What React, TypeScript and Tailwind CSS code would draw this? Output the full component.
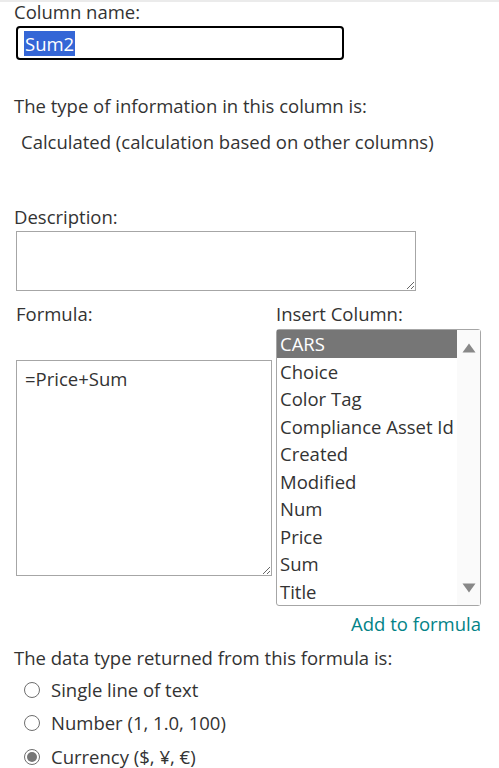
import { useState } from "react";

const columns = [
  "CARS",
  "Choice",
  "Color Tag",
  "Compliance Asset Id",
  "Created",
  "Modified",
  "Num",
  "Price",
  "Sum",
  "Title",
];

const returnTypes = [
  "Single line of text",
  "Number (1, 1.0, 100)",
  "Currency ($, ¥, €)",
];

const App = () => {
  const [selected, setSelected] = useState(0);
  const [returnType, setReturnType] = useState(2);

  return (
    <main className="w-[499px] h-[768px] overflow-hidden bg-white border-t-2 border-[#ebebeb] text-[#333333] text-[18.5px] font-['Open_Sans',sans-serif]">
      <div className="pl-[14px]">
        {/* Column name */}
        <p className="leading-[22px] -mt-[1px]">Column name:</p>
        <div className="mt-[3px] ml-[2px] w-[328px] h-[34px] border-2 border-black rounded-[4px] flex items-center pl-[6px]">
          <span className="bg-[#3466d6] text-white leading-[25px] px-[1px]">Sum2</span>
        </div>

        {/* Column type */}
        <p className="mt-[34px] leading-6">The type of information in this column is:</p>
        <p className="mt-[12px] leading-6 pl-[7px]">
          Calculated (calculation based on other columns)
        </p>

        {/* Description */}
        <p className="mt-[51px] leading-6">Description:</p>
        <textarea
          className="block mt-[2px] ml-[2px] w-[400px] h-[60px] border border-[#a6a6a6] outline-none"
          defaultValue=""
        />

        {/* Formula + Insert Column */}
        <div className="flex mt-[11px]">
          <div className="w-[262px] flex flex-col">
            <p className="leading-6 pl-[2px]">Formula:</p>
            <textarea
              className="block mt-[34px] ml-[2px] w-[256px] h-[216px] border border-[#a6a6a6] outline-none pt-[6px] px-[8px] leading-6"
              defaultValue="=Price+Sum"
            />
          </div>
          <div className="flex flex-col">
            <p className="leading-6">Insert Column:</p>
            <div className="mt-[3px] w-[205px] border border-[#a6a6a6] rounded-[3px] flex">
              <ul className="flex-1">
                {columns.map((col, index) => (
                  <li
                    key={col}
                    onClick={() => setSelected(index)}
                    className={
                      index === selected
                        ? "h-[27.5px] leading-[27.5px] pl-[3px] bg-[#767676] text-white whitespace-nowrap"
                        : "h-[27.5px] leading-[27.5px] pl-[3px] whitespace-nowrap"
                    }
                  >
                    {col}
                  </li>
                ))}
              </ul>
              <div className="w-[23px] bg-[#fafafa] flex flex-col items-center justify-between pt-[13px] pb-[12px]">
                <svg width="14" height="10" viewBox="0 0 14 10">
                  <polygon points="7,0.5 13.5,9.5 0.5,9.5" fill="#888888" />
                </svg>
                <svg width="14" height="10" viewBox="0 0 14 10">
                  <polygon points="0.5,0.5 13.5,0.5 7,9.5" fill="#888888" />
                </svg>
              </div>
            </div>
          </div>
        </div>

        <div className="flex justify-end w-[467px] mt-[6px]">
          <a className="leading-6 text-[#038387] cursor-pointer">Add to formula</a>
        </div>

        {/* Return type */}
        <p className="mt-[10px] leading-6">The data type returned from this formula is:</p>
        <div className="mt-[3px] pl-[10px]">
          {returnTypes.map((label, index) => (
            <label
              key={label}
              onClick={() => setReturnType(index)}
              className="flex items-center gap-[11px] h-[33.5px] cursor-pointer"
            >
              <span className="w-[16px] h-[16px] rounded-full border border-[#6e6e6e] flex items-center justify-center">
                {index === returnType && (
                  <span className="w-[10px] h-[10px] rounded-full bg-[#767676]" />
                )}
              </span>
              <span className="leading-6">{label}</span>
            </label>
          ))}
        </div>
      </div>
    </main>
  );
};

export default App;
